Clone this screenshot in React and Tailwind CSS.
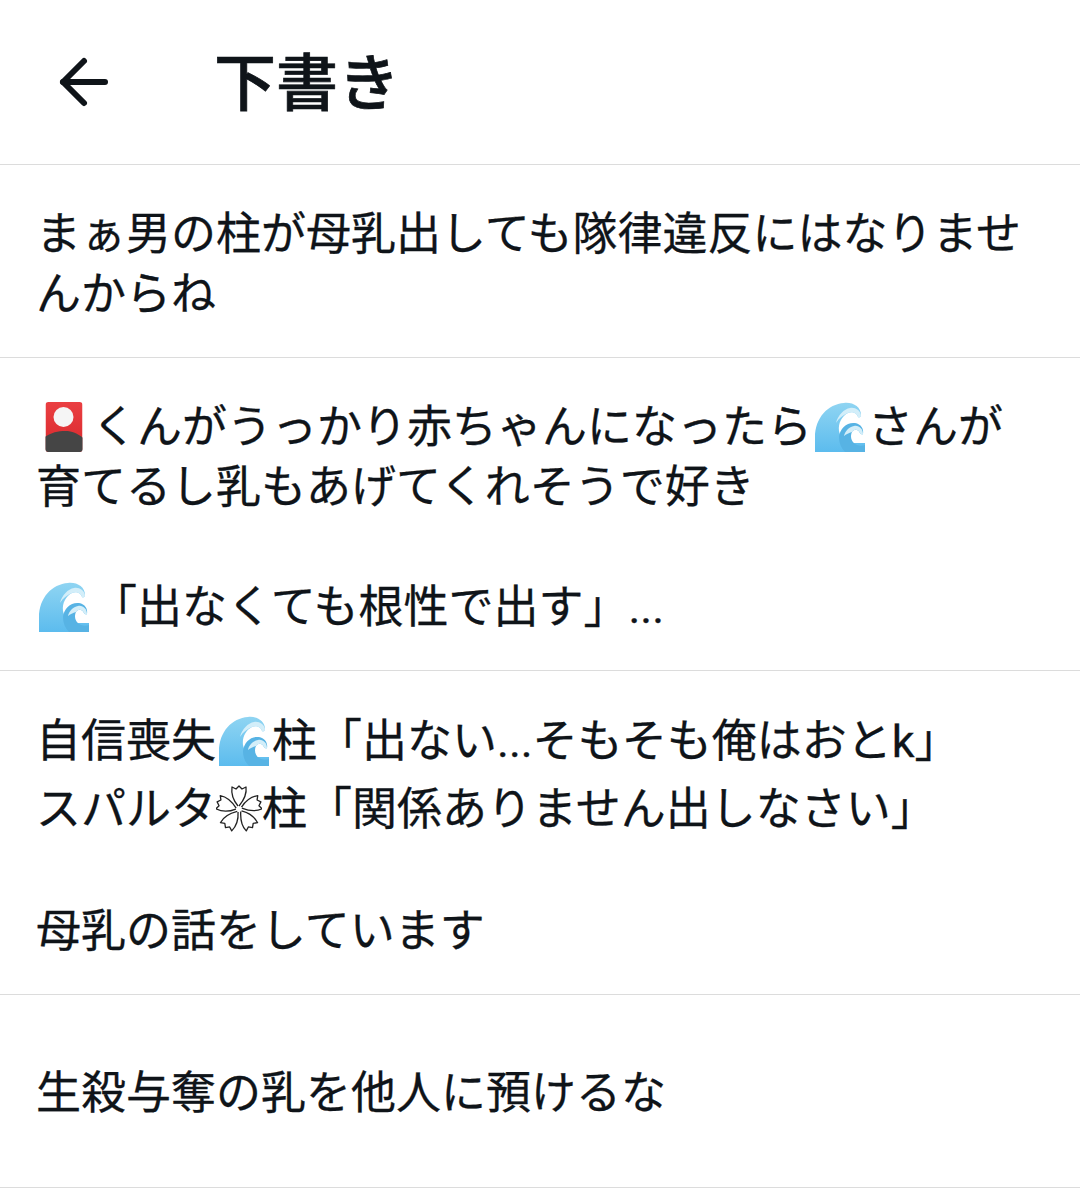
import React from 'react';
import { ArrowLeft } from 'lucide-react';

const font = 'font-["Roboto","Noto_Sans_CJK_JP",sans-serif]';

const Hanafuda = () => (
  <svg viewBox="-0.5 0 56 52" className="inline-block w-[56px] h-[52px] align-[-10px]">
    <defs>
      <clipPath id="card">
        <rect x="9" y="1" width="37" height="50" rx="3" />
      </clipPath>
      <linearGradient id="cardRed" x1="0" y1="0" x2="0" y2="1">
        <stop offset="0" stopColor="#ea3f42" />
        <stop offset="1" stopColor="#d9282c" />
      </linearGradient>
    </defs>
    <g clipPath="url(#card)">
      <rect x="9" y="1" width="37" height="50" fill="url(#cardRed)" />
      <circle cx="27" cy="16" r="10" fill="#f5f5f5" />
      <path d="M7 52V37C13 32 21 30 29 30C36 30 42 33 48 38V52Z" fill="#454545" />
    </g>
  </svg>
);

const Wave = () => (
  <svg viewBox="-2 0 56 52" className="inline-block w-[56px] h-[52px] align-[-10px]">
    <defs>
      <linearGradient id="sea" x1="0" y1="0" x2="0" y2="1">
        <stop offset="0" stopColor="#8fd4f2" />
        <stop offset="1" stopColor="#5cbcee" />
      </linearGradient>
    </defs>
    <path d="M1 51V36C1 17 14 3 30 2C39 1 47 6 47 14C47 16 45 17 44 16C43 12 38 10 34 12C28 15 24 22 25 30C26 35 28 39 31 42L51 42V51Z" fill="url(#sea)" />
    <path d="M25 36C26 27 33 21 41 22C47 23 50 28 49 33C48 34 47 33 46 32C44 28 40 28 38 31C36 35 37 40 41 43C44 45 48 45 51 44V51H31C27 47 25 42 25 36Z" fill="#57b3e4" />
    <path d="M34 12C38 10 43 12 44 16C45 17 47 16 47 14C46 9 41 6 36 7C30 8 24 14 22 22C25 17 29 14 34 12Z" fill="#d3eef9" />
    <path d="M38 31C40 28 44 28 46 32C47 33 48 34 49 33C49 28 45 24 40 25C35 26 31 30 30 35C32 33 35 32 38 31Z" fill="#d3eef9" />
  </svg>
);

const Blossom = () => {
  const petal = 'M22 21C17 15 15 9 16 2L20 4L23 1L26 4L30 2C31 9 28 15 23 21';
  return (
    <svg viewBox="0 0 46 52" className="inline-block w-[46px] h-[52px] align-[-9px]">
      <g fill="#fff" stroke="#222" strokeWidth="1.3" strokeLinejoin="round" transform="translate(0 3)">
        {[0, 72, 144, 216, 288].map((r) => (
          <path key={r} d={petal} transform={`rotate(${r} 23 24)`} />
        ))}
      </g>
    </svg>
  );
};

const Row = ({ className, children }) => (
  <div className={`border-b border-[#dcdcdc] px-[36px] text-[45px] [-webkit-text-stroke:0.3px] ${className}`}>{children}</div>
);

export default function App() {
  return (
    <div className={`w-[1080px] h-[1192px] bg-white text-[#0f1419] overflow-hidden ${font}`}>
      <header className="flex items-center h-[165px] border-b border-[#dcdcdc] pl-[48px]">
        <ArrowLeft size={72} strokeWidth={2} className="w-[72px] h-[72px]" />
        <h1 className="ml-[94px] pt-[5px] text-[62px] font-medium leading-none [-webkit-text-stroke:0.7px]">下書き</h1>
      </header>

      <Row className="pt-[40px] h-[193px] leading-[60px]">
        まぁ男の柱が母乳出しても隊律違反にはなりませんからね
      </Row>

      <Row className="pt-[40px] h-[313px] leading-[60px]">
        <div>
          <Hanafuda />
          くんがうっかり赤ちゃんになったら
          <Wave />
          さんが
        </div>
        <div>育てるし乳もあげてくれそうで好き</div>
        <div className="h-[60px]" />
        <div>
          <Wave />
          「出なくても根性で出す」...
        </div>
      </Row>

      <Row className="pt-[36px] h-[324px] leading-[60px]">
        <div className="leading-[70px]">
          自信喪失
          <Wave />
          柱「出ない...そもそも俺はおとk」
        </div>
        <div className="leading-[65px]">
          スパルタ
          <Blossom />
          柱「関係ありません出しなさい」
        </div>
        <div className="h-[60px]" />
        <div>母乳の話をしています</div>
      </Row>

      <Row className="flex items-center h-[193px] leading-[60px] pt-[6px]">
        生殺与奪の乳を他人に預けるな
      </Row>
    </div>
  );
}
